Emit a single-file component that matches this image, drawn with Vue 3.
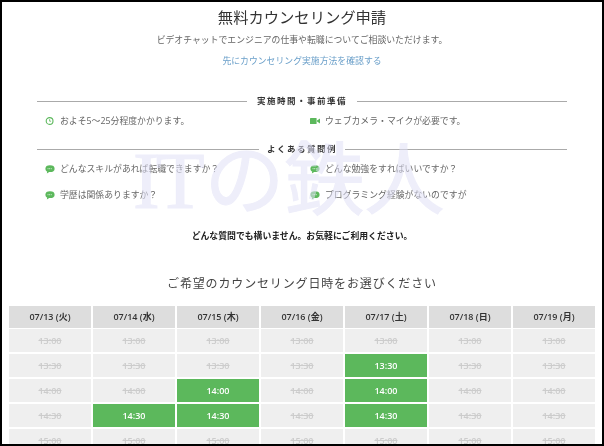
<script setup>
const days = ['07/13 (火)', '07/14 (水)', '07/15 (木)', '07/16 (金)', '07/17 (土)', '07/18 (日)', '07/19 (月)']
const times = ['13:00', '13:30', '14:00', '14:30', '15:00']

// 空き枠 (列番号-時間)
const open = ['4-13:30', '2-14:00', '4-14:00', '1-14:30', '2-14:30', '4-14:30']

const isOpen = (col, time) => open.includes(col + '-' + time)

const faqs = [
  'どんなスキルがあれば転職できますか？',
  'どんな勉強をすればいいですか？',
  '学歴は関係ありますか？',
  'プログラミング経験がないのですが'
]
</script>

<template>
  <div class="frame">
    <div class="page">
      <h1 class="title">無料カウンセリング申請</h1>
      <p class="lead">ビデオチャットでエンジニアの仕事や転職についてご相談いただけます。</p>
      <a class="link">先にカウンセリング実施方法を確認する</a>

      <section class="section first">
        <h2 class="rule">実施時間・事前準備</h2>
        <div class="items">
          <div class="item">
            <svg class="icon" viewBox="0 0 10 10">
              <circle cx="4.6" cy="5" r="3.4" fill="none" stroke="#5cb85c" stroke-width="1.1" />
              <path d="M4.6 3.2v2h1.5" fill="none" stroke="#5cb85c" stroke-width=".8" />
            </svg>
            <span>およそ5～25分程度かかります。</span>
          </div>
          <div class="item">
            <svg class="icon" viewBox="0 0 10 10">
              <rect x="0" y="2" width="6.6" height="6" rx=".6" fill="#5cb85c" />
              <path d="M7 4.6 10 2.6v4.8L7 5.4z" fill="#5cb85c" />
            </svg>
            <span>ウェブカメラ・マイクが必要です。</span>
          </div>
        </div>
      </section>

      <section class="section second">
        <h2 class="rule tight">よくある質問例</h2>
        <div class="items faq">
          <div v-for="q in faqs" :key="q" class="item">
            <svg class="icon" viewBox="0 0 10 10">
              <ellipse cx="5" cy="4.7" rx="4.6" ry="3.4" fill="#5cb85c" />
              <path d="M2.4 7 1.8 9.4 5 7.6z" fill="#5cb85c" />
              <path d="M2.6 4.7h4.8" stroke="#fff" stroke-width=".8" stroke-dasharray=".9 .7" />
            </svg>
            <span>{{ q }}</span>
          </div>
        </div>
      </section>

      <p class="note">どんな質問でも構いません。お気軽にご利用ください。</p>

      <h2 class="heading">ご希望のカウンセリング日時をお選びください</h2>

      <div class="table">
        <div v-for="day in days" :key="day" class="head">{{ day }}</div>
        <template v-for="time in times" :key="time">
          <div
            v-for="(day, col) in days"
            :key="day"
            class="slot"
            :class="{ open: isOpen(col, time) }"
          >{{ time }}</div>
        </template>
      </div>

      <div class="watermark"><span class="latin">IT</span>の鉄人</div>
    </div>
  </div>
</template>

<style>
html, body {
  margin: 0;
  background: #000;
}
</style>

<style scoped>
.frame {
  width: 604px;
  height: 446px;
  box-sizing: border-box;
  border: 2px solid #000;
  background: #fff;
  overflow: hidden;
}

.page {
  position: relative;
  height: 100%;
  font-family: "Open Sans", "Noto Sans CJK JP", sans-serif;
  font-size: 8.85px;
  line-height: 14px;
  color: #666;
  text-align: center;
  filter: blur(0.35px);
}

.title {
  margin: 5px 0 0;
  font-size: 15.3px;
  line-height: 20px;
  font-weight: 400;
  color: #333;
}

.lead {
  margin: 6px 0 0;
}

.link {
  display: block;
  margin-top: 7px;
  color: #6a9fc9;
}

.section {
  width: 530px;
  margin-left: 35px;
}

.first {
  margin-top: 26px;
}

.second {
  margin-top: 14px;
}

.rule {
  display: flex;
  align-items: center;
  gap: 10px;
  margin: 0;
  font-size: 8.5px;
  line-height: 14px;
  font-weight: 700;
  letter-spacing: 1.5px;
  color: #333;
}

.rule::before,
.rule::after {
  content: "";
  flex: 1;
  height: 1px;
  background: #aaa;
}

.tight {
  gap: 8px;
}

.items {
  display: grid;
  grid-template-columns: 265px 265px;
  row-gap: 12px;
  margin-top: 6px;
  padding-left: 8px;
  text-align: left;
}

.item {
  display: flex;
  align-items: center;
  gap: 5px;
}

.icon {
  width: 10px;
  height: 10px;
  flex: none;
}

.note {
  margin: 27px 0 0;
  font-weight: 700;
  color: #222;
}

.heading {
  margin: 31px 0 0;
  font-size: 12px;
  line-height: 20px;
  font-weight: 400;
  letter-spacing: 0.85px;
  color: #444;
}

.table {
  display: grid;
  grid-template-columns: repeat(7, 82px);
  grid-template-rows: 21px;
  grid-auto-rows: 23px;
  gap: 2px;
  margin: 12px 0 0 7px;
}

.head {
  display: flex;
  align-items: center;
  justify-content: center;
  margin-bottom: -1px;
  background: #ddd;
  font-size: 9px;
  font-weight: 600;
  color: #333;
}

.slot {
  display: flex;
  align-items: center;
  justify-content: center;
  background: #efefef;
  font-size: 9px;
  font-weight: 600;
  color: #ccc;
  text-decoration: line-through;
}

.slot.open {
  background: #5cb85c;
  color: #fff;
  text-decoration: none;
}

.watermark {
  position: absolute;
  left: 131px;
  top: 126px;
  font-family: "Liberation Serif", "Noto Sans CJK JP", serif;
  font-size: 80px;
  line-height: 96px;
  white-space: nowrap;
  color: #e0e0f6;
  -webkit-text-stroke: 1px #e0e0f6;
  opacity: 0.55;
  pointer-events: none;
}

.latin {
  letter-spacing: -4px;
  margin-right: 4px;
}
</style>
